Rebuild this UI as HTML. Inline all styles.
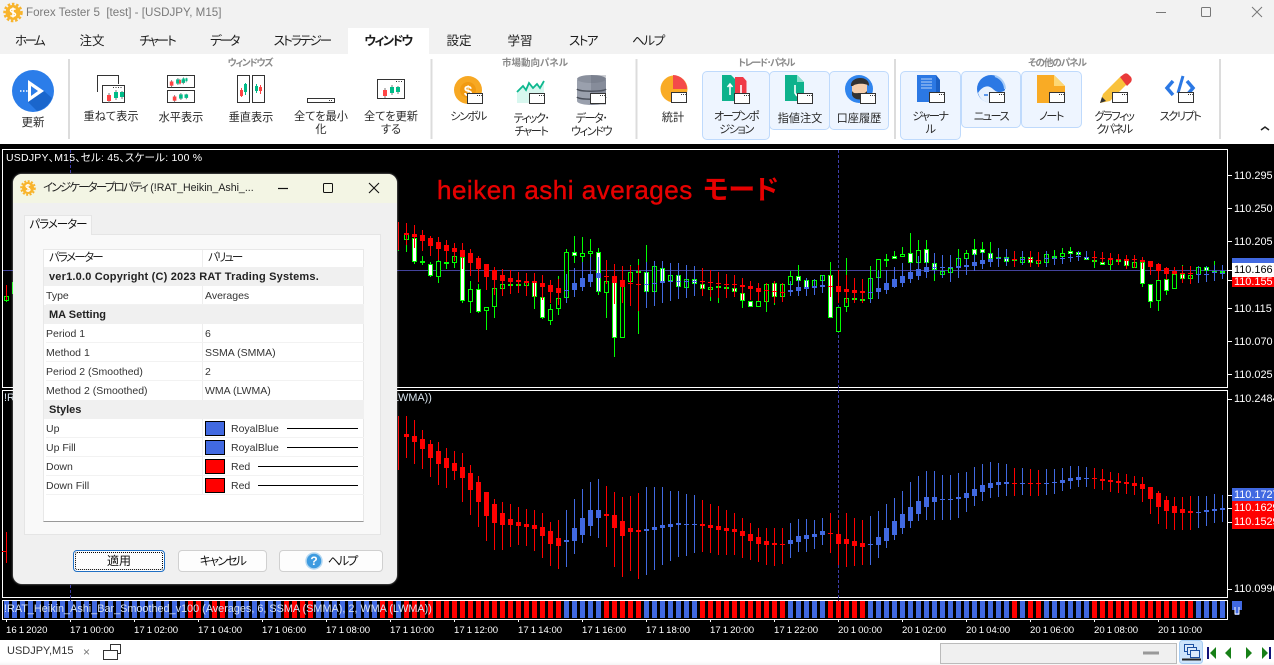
<!DOCTYPE html>
<html lang="ja"><head><meta charset="utf-8"><title>Forex Tester 5</title>
<style>
html,body{margin:0;padding:0;width:1274px;height:665px;overflow:hidden;background:#fff}
body{position:relative;font-family:"Liberation Sans","Noto Sans CJK JP",sans-serif;font-size:12px;color:#222;font-feature-settings:"palt"}
.a{position:absolute;white-space:nowrap}
.c{position:absolute;white-space:nowrap;transform:translateX(-50%);text-align:center;line-height:13px;font-size:11.2px;color:#2a2a2a}
.k{letter-spacing:-1.5px}
.g{position:absolute;white-space:nowrap;transform:translateX(-50%);font-size:9.5px;font-weight:bold;color:#8a8a8a;line-height:11px}
.t{position:absolute;white-space:nowrap;transform:translateX(-50%);top:34px;font-size:12.5px;line-height:15px;color:#1d1d1d}
.hl{position:absolute;background:#eef5ff;border:1.5px solid #bfdafc;border-radius:5px;box-sizing:border-box}
.p{position:absolute;left:1234px;color:#fff;font-size:10.9px;line-height:13px;white-space:nowrap}
.x{position:absolute;top:625px;color:#fff;font-size:9.6px;word-spacing:-.6px;line-height:12px;white-space:nowrap}
.r{position:absolute;left:46px;width:318px;font-size:10.5px;line-height:21px;height:19px;color:#333;white-space:nowrap}
.r i{font-style:normal;position:absolute;left:159px}
.sec{background:#f0f0f0;font-weight:bold;font-size:11px;color:#222;left:44px;width:320px;padding-left:5px;box-sizing:border-box}
.sw{position:absolute;left:205px;width:20px;height:15px;border:1px solid #000;box-sizing:border-box}
.ln{position:absolute;height:1px;background:#000;right:16px}
.btn{position:absolute;top:550px;height:22px;background:#fdfdfd;border:1px solid #d0d0d0;border-radius:4px;box-sizing:border-box;text-align:center;line-height:21px;font-size:12px;color:#111}
</style></head><body>

<!-- title bar + tabs -->
<div class="a" style="left:0;top:0;width:1274px;height:54px;background:#f2f2f2"></div>
<div class="a" style="left:348px;top:28px;width:81px;height:26px;background:#fff"></div>
<div class="a" style="left:26px;top:5px;font-size:11.6px;line-height:15px;color:#7a7a7a">Forex Tester 5&nbsp; [test] - [USDJPY, M15]</div>
<div class="t" style="left:29px;letter-spacing:-2.6px">ホーム</div><div class="t" style="left:92px">注文</div><div class="t" style="left:157px;letter-spacing:-2px">チャート</div><div class="t" style="left:224px;letter-spacing:-2.3px">データ</div><div class="t" style="left:302px;letter-spacing:-1.8px">ストラテジー</div><div class="t" style="left:388px;font-weight:bold;letter-spacing:-1.8px">ウィンドウ</div><div class="t" style="left:459px">設定</div><div class="t" style="left:520px">学習</div><div class="t" style="left:583px;letter-spacing:-1.5px">ストア</div><div class="t" style="left:648px;letter-spacing:-1.3px">ヘルプ</div>

<!-- highlighted ribbon boxes -->
<div class="hl" style="left:702px;top:71px;width:68px;height:69px"></div>
<div class="hl" style="left:769px;top:71px;width:61px;height:59px"></div>
<div class="hl" style="left:829px;top:71px;width:60px;height:59px"></div>
<div class="hl" style="left:900px;top:71px;width:61px;height:69px"></div>
<div class="hl" style="left:961px;top:71px;width:60px;height:57px"></div>
<div class="hl" style="left:1021px;top:71px;width:61px;height:57px"></div>

<!-- chart -->
<svg class="a" style="left:0;top:144px" width="1274" height="496" viewBox="0 144 1274 496" shape-rendering="crispEdges">
<rect x="0" y="144" width="1274" height="496" fill="#000"/>
<path d="M2.5 149.5H1227.5V387.5H2.5ZM2.5 390.5H1227.5V597.5H2.5ZM2.5 600.5H1227.5V619.5H2.5Z" fill="none" stroke="#fff"/>
<path d="M3 270.5H1227" stroke="#43439c"/>
<path d="M838.5 150V619M70.5 150V619" stroke="#3d3da8" stroke-dasharray="3 2"/>
<path d="M1228 175.5h4M1228 208.5h4M1228 241.5h4M1228 308.5h4M1228 341.5h4M1228 374.5h4M1228 399.5h4M1228 495.5h4M1228 589.5h4" stroke="#fff"/>
<path d="M6.5 619v3M70.5 619v3M134.5 619v3M198.5 619v3M262.5 619v3M326.5 619v3M390.5 619v3M454.5 619v3M518.5 619v3M582.5 619v3M646.5 619v3M710.5 619v3M774.5 619v3M838.5 619v3M902.5 619v3M966.5 619v3M1030.5 619v3M1094.5 619v3M1158.5 619v3" stroke="#fff"/>

<g transform="translate(.5 0)" fill="none">
<!-- green wicks -->
<path stroke="#0f0" d="M6 292V302M12 282V294M398 245V251M406 233V252M414 238V264M422 256V265M430 262V277M438 260V283M446 261V269M454 255V268M462 257V303M470 281V313M478 284V313M486 307V330M494 288V318M502 284V296M526 282V296M534 281V309M542 297V319M550 304V325M558 276V315M566 249V303M574 236V263M582 237V262M590 239V257M598 248V295M606 281V318M614 282V357M622 282V338M630 265V282M638 259V334M646 245V292M654 266V292M662 268V282M670 275V281M678 275V287M686 279V288M694 279V284M702 284V289M710 287V301M718 286V303M734 288V292M742 293V308M750 301V307M758 301V307M766 284V312M774 283V305M782 284V297M790 271V285M798 265V281M806 280V288M814 280V287M822 275V281M830 262V318M838 307V332M846 258V312M870 266V303M878 259V278M886 254V267M894 251V259M902 247V257M910 233V263M918 240V263M926 240V263M934 263V281M942 271V275M950 268V282M958 249V267M966 250V259M974 239V255M982 242V253M990 242V259M1006 257V262M1022 257V263M1030 257V263M1038 260V264M1046 254V263M1054 250V258M1062 248V257M1070 247V254M1078 252V255M1086 257V260M1094 257V268M1102 262V265M1110 259V270M1126 260V266M1134 262V268M1142 262V287M1150 284V308M1158 280V311M1166 279V295M1174 274V289M1182 265V279M1190 275V279M1198 267V275M1206 267V271M1214 261V272"/>
<!-- green bodies -->
<path stroke="#0f0" stroke-width="5" d="M6 296V301M406 233V240M414 238V262M422 261V263M430 264V276M438 261V277M446 262V264M454 256V263M462 257V301M470 289V302M478 289V312M486 307V311M494 288V307M502 284V289M510 284V286M518 284V286M526 282V286M534 281V297M542 297V318M550 309V321M558 298V309M566 252V298M574 252V256M582 253V257M590 251V254M598 252V292M606 281V293M614 282V338M622 282V338M630 272V282M638 271V273M646 272V292M654 266V292M662 268V282M670 275V281M678 275V287M686 279V288M694 279V284M702 284V289M710 287V290M718 286V288M726 287V289M734 288V292M742 293V301M750 301V307M758 301V307M766 284V302M774 283V297M782 284V297M790 276V285M798 276V281M806 280V288M814 280V287M822 275V281M830 275V318M838 307V332M846 298V307M854 298V300M862 299V301M870 278V299M878 259V278M886 259V261M894 256V259M902 254V257M910 253V263M918 250V263M926 249V263M934 263V270M942 271V275M950 268V273M958 258V267M966 253V259M974 249V255M982 249V253M990 253V259M998 257V259M1006 257V262M1014 259V261M1022 257V263M1030 257V263M1038 260V264M1046 254V263M1054 256V258M1062 253V257M1070 251V254M1078 252V255M1086 257V260M1094 260V262M1102 262V265M1110 259V265M1118 260V262M1126 260V266M1134 262V268M1142 262V284M1150 284V302M1158 280V301M1166 279V291M1174 274V289M1182 274V279M1190 275V279M1198 267V275M1206 267V271M1214 271V273M1222 271V273"/>
<!-- white inner -->
<path stroke="#fff" stroke-width="3" d="M414 239V261M430 265V275M462 258V300M478 290V311M534 282V296M542 298V317M574 253V255M598 253V291M614 283V337M646 273V291M662 269V281M678 276V286M694 280V283M702 285V288M734 289V291M742 294V300M750 302V306M774 284V296M798 277V280M806 281V287M830 276V317M894 257V258M910 254V262M926 250V262M934 264V269M974 250V254M982 250V252M990 254V258M1006 258V261M1030 258V262M1070 252V253M1078 253V254M1086 258V259M1102 263V264M1126 261V265M1142 263V283M1150 285V301M1166 280V290M1182 275V278M1206 268V270"/>
<!-- black inner -->
<path stroke="#000" stroke-width="3" d="M6 297V300M406 234V239M438 262V276M454 257V262M470 290V301M486 308V310M494 289V306M502 285V288M526 283V285M550 310V320M558 299V308M566 253V297M582 254V256M590 252V253M606 282V292M622 283V337M630 273V281M654 267V291M670 276V280M686 280V287M710 288V289M758 302V306M766 285V301M782 285V296M790 277V284M814 281V286M822 276V280M838 308V331M846 299V306M870 279V298M878 260V277M902 255V256M918 251V262M942 272V274M950 269V272M958 259V266M966 254V258M1022 258V262M1038 261V263M1046 255V262M1062 254V256M1110 260V264M1134 263V267M1158 281V300M1174 275V288M1190 276V278M1198 268V274"/>
<!-- top red wicks -->
<path stroke="#f00" d="M6 285V300M398 222V250M406 223V245M414 225V248M422 230V251M430 236V256M438 237V260M446 240V262M454 243V261M462 243V269M470 249V276M478 256V282M486 264V290M494 267V295M502 269V296M510 270V294M518 272V293M526 273V296M534 273V297M542 275V300M550 280V303M558 279V305M606 260V284M614 264V304M622 266V303M630 266V306M638 265V311M702 268V296M710 270V297M718 272V298M726 274V298M734 275V297M742 278V300M750 281V300M758 283V301M766 283V302M774 281V303M782 283V302M830 275V297M838 270V303M846 275V303M854 278V303M862 279V303M1014 251V267M1030 251V267M1038 252V267M1094 251V262M1102 252V263M1110 253V265M1118 254V265M1126 255V269M1134 255V268M1142 257V269M1150 261V275M1158 263V280M1166 267V280M1174 267V275M1182 266V283M1190 266V284"/>
<!-- top blue wicks -->
<path stroke="#4169e1" d="M566 274V303M574 268V297M582 262V291M590 257V287M598 257V292M646 262V308M654 261V306M662 261V303M670 263V301M678 263V299M686 265V298M694 266V296M790 281V296M798 278V296M806 278V296M814 279V295M822 275V293M870 278V303M878 270V299M886 270V294M894 267V288M902 263V287M910 263V283M918 256V280M926 253V278M934 253V274M942 255V278M950 255V282M958 257V278M966 258V275M974 253V271M982 252V269M990 253V267M998 248V267M1006 249V266M1022 251V265M1046 251V267M1054 256V265M1062 257V264M1070 254V262M1078 251V261M1086 251V260M1198 266V283M1206 266V282M1214 265V281M1222 265V279"/>
<!-- top red bodies -->
<path stroke="#f00" stroke-width="5" d="M406 233V235M414 234V237M422 235V241M430 238V246M438 242V249M446 245V251M454 248V252M462 250V257M470 253V263M478 258V269M486 264V277M494 270V280M502 275V281M510 278V282M518 280V282M526 281V283M534 281V283M542 283V287M550 285V292M558 288V293M606 276V277M614 276V283M622 280V287M630 283V284M638 284V285M702 281V282M710 282V283M718 283V284M726 284V285M734 284V285M742 285V287M750 286V289M758 288V292M766 290V291M774 291V292M782 292V293M830 286V287M838 286V292M846 289V292M854 290V293M862 291V293M1014 259V260M1030 259V260M1038 260V261M1094 257V258M1102 258V259M1110 258V260M1118 259V260M1126 259V261M1134 259V260M1142 260V262M1150 261V267M1158 264V271M1166 268V274M1174 271V274M1182 273V274M1190 273V274"/>
<!-- top blue bodies -->
<path stroke="#4169e1" stroke-width="5" d="M566 290V291M574 283V290M582 278V287M590 274V282M598 273V278M646 284V285M654 283V284M662 281V283M670 281V282M678 281V282M686 281V282M694 281V282M790 290V292M798 287V291M806 287V289M814 286V288M822 285V287M870 292V293M878 288V292M886 283V290M894 279V287M902 276V283M910 272V279M918 269V276M926 267V272M934 267V268M942 267V268M950 267V268M958 266V268M966 265V267M974 262V266M982 260V264M990 259V262M998 258V259M1006 258V259M1022 259V260M1046 258V259M1054 258V259M1062 258V259M1070 257V258M1078 256V257M1086 257V258M1198 274V275M1206 274V275M1214 272V273M1222 273V274"/>

<!-- bottom red -->
<path stroke="#f00" d="M6 532V563M398 416V470M406 416V458M414 420V464M422 430V469M430 440V477M438 442V485M446 448V488M454 451V480M462 453V502M470 465V515M478 476V527M486 492V541M494 499V550M502 502V550M510 504V547M518 507V545M526 509V546M534 510V551M542 513V558M550 522V566M558 520V569M606 486V547M614 492V567M622 497V577M630 496V571M638 493V579M702 500V552M710 504V553M718 506V555M726 510V555M734 513V555M742 518V558M750 523V560M758 528V562M766 528V565M774 528V566M782 528V564M830 513V553M838 520V565M846 513V567M854 518V566M862 520V565M1014 468V496M1030 469V496M1038 470V496M1094 468V489M1102 469V490M1110 472V492M1118 473V493M1126 474V494M1134 476V495M1142 477V502M1150 487V514M1158 491V524M1166 496V529M1174 497V530M1182 497V530M1190 496V530"/>
<path stroke="#f00" stroke-width="5" d="M4 551V552M406 434V437M414 436V442M422 439V449M430 444V458M438 451V464M446 458V468M454 463V471M462 467V478M470 473V490M478 482V502M486 492V516M494 504V523M502 513V525M510 519V525M518 522V526M526 524V527M534 525V529M542 527V536M550 531V544M558 538V546M606 514V516M614 515V528M622 521V536M630 528V532M638 530V532M702 524V526M710 525V528M718 526V530M726 528V531M734 529V532M742 531V536M750 534V541M758 537V544M766 541V545M774 543V545M782 544V545M830 533V534M838 534V544M846 539V544M854 541V546M862 543V547M1014 483V484M1030 483V484M1038 483V484M1094 478V479M1102 479V481M1110 480V482M1118 481V483M1126 482V484M1134 483V486M1142 484V489M1150 487V499M1158 493V507M1166 500V511M1174 506V513M1182 509V513M1190 511V513"/>
<!-- bottom blue -->
<path stroke="#4169e1" d="M566 510V567M574 499V554M582 489V543M590 482V536M598 479V538M646 487V575M654 487V570M662 487V565M670 491V561M678 491V557M686 494V556M694 495V553M790 523V558M798 519V552M806 519V552M814 520V549M822 518V545M870 516V565M878 511V558M886 504V548M894 498V540M902 491V534M910 482V528M918 476V521M926 471V520M934 471V520M942 475V520M950 475V520M958 473V518M966 472V512M974 467V506M982 464V501M990 462V498M998 463V497M1006 464V496M1022 468V495M1046 469V495M1054 469V494M1062 468V491M1070 466V489M1078 466V487M1086 467V487M1198 496V528M1206 496V526M1214 494V523M1222 495V522"/>
<path stroke="#4169e1" stroke-width="5" d="M566 540V542M574 528V541M582 518V535M590 510V526M598 510V518M646 529V531M654 527V530M662 525V528M670 524V527M678 523V525M686 524V525M694 524V525M790 540V544M798 536V542M806 535V539M814 534V537M822 531V535M870 544V545M878 537V545M886 528V541M894 521V535M902 514V528M910 507V521M918 501V514M926 497V507M934 497V502M942 499V500M950 499V500M958 497V499M966 493V498M974 489V496M982 485V492M990 483V488M998 482V485M1006 482V484M1022 483V484M1046 483V484M1054 482V483M1062 480V483M1070 478V481M1078 477V480M1086 478V479M1198 512V513M1206 510V512M1214 509V511M1222 508V510"/>
</g>

<!-- strip -->
<path d="M4 609.5H1226" stroke="#4169e1" stroke-width="17" stroke-dasharray="5 3" fill="none"/>
<path d="M188 609.5H204M212 609.5H228M284 609.5H300M300 609.5H316M380 609.5H396M404 609.5H564M604 609.5H644M700 609.5H788M828 609.5H868M1012 609.5H1020M1028 609.5H1044M1092 609.5H1196" stroke="#f00" stroke-width="17" stroke-dasharray="5 3" fill="none"/>
<path d="M1232 601h10v9h-3v5h-4v-5h-3z" fill="#4169e1"/><path d="M1235 607v7h4v-7" stroke="#fff" fill="none"/>

<!-- price boxes -->
<rect x="1232" y="258" width="42" height="6" fill="#4169e1"/>
<rect x="1232" y="276" width="42" height="11" fill="#f00"/>
<rect x="1232" y="263" width="42" height="14" fill="#fff"/>
<rect x="1232" y="488" width="42" height="13" fill="#4169e1"/>
<rect x="1232" y="501" width="42" height="28" fill="#f00"/>
<path d="M1228 270.5h4M1228 280.5h4M1228 495.5h4M1228 508.5h4M1228 522.5h4" stroke="#fff"/>
</svg>

<div class="p" style="top:170px">110.295</div><div class="p" style="top:203px">110.250</div><div class="p" style="top:236px">110.205</div>
<div class="p" style="top:264px;color:#000">110.166</div><div class="p" style="top:276px;height:11px;overflow:hidden">110.155</div>
<div class="p" style="top:303px">110.115</div><div class="p" style="top:336px">110.070</div><div class="p" style="top:369px">110.025</div>
<div class="p" style="top:393px">110.2484</div><div class="p" style="top:489px;width:42px;overflow:hidden">110.1727</div><div class="p" style="top:502px;width:42px;overflow:hidden">110.1629</div><div class="p" style="top:516px;width:42px;overflow:hidden">110.1529</div><div class="p" style="top:583px;width:42px;overflow:hidden">110.0990</div>

<div class="x" style="left:6px">16 1 2020</div><div class="x" style="left:70px">17 1 00:00</div><div class="x" style="left:134px">17 1 02:00</div><div class="x" style="left:198px">17 1 04:00</div><div class="x" style="left:262px">17 1 06:00</div><div class="x" style="left:326px">17 1 08:00</div><div class="x" style="left:390px">17 1 10:00</div><div class="x" style="left:454px">17 1 12:00</div><div class="x" style="left:518px">17 1 14:00</div><div class="x" style="left:582px">17 1 16:00</div><div class="x" style="left:646px">17 1 18:00</div><div class="x" style="left:710px">17 1 20:00</div><div class="x" style="left:774px">17 1 22:00</div><div class="x" style="left:838px">20 1 00:00</div><div class="x" style="left:902px">20 1 02:00</div><div class="x" style="left:966px">20 1 04:00</div><div class="x" style="left:1030px">20 1 06:00</div><div class="x" style="left:1094px">20 1 08:00</div><div class="x" style="left:1158px">20 1 10:00</div>

<div class="a" style="left:6px;top:152px;color:#fff;font-size:10.5px;letter-spacing:.22px;line-height:13px">USDJPY、M15、セル: 45、スケール: 100 %</div>
<div class="a" style="left:4px;top:392px;color:#d8e4ee;font-size:10.85px;line-height:13px">!RAT_Heikin_Ashi_Bar_Smoothed_v100 (Averages, 6, SSMA (SMMA), 2, WMA (LWMA))</div>
<div class="a" style="left:4px;top:602px;color:#d8e4f4;font-size:10.85px;line-height:14px">!RAT_Heikin_Ashi_Bar_Smoothed_v100 (Averages, 6, SSMA (SMMA), 2, WMA (LWMA))</div>
<div class="a" style="left:437px;top:175px;color:#e60000;font-size:26px;letter-spacing:.5px;line-height:30px;-webkit-text-stroke:.4px #e60000">heiken ashi averages</div>
<div class="a" style="left:703px;top:175px;color:#e60000;font-size:27px;font-weight:bold;line-height:30px">モード</div>

<!-- ribbon icons -->
<svg class="a" style="left:0;top:0" width="1274" height="144" viewBox="0 0 1274 144">
<defs>
<g id="w"><rect x=".5" y=".5" width="15" height="10" fill="#fff" stroke="#333"/><path d="M10 2.500h1M12 2.500h1M14 2.500h.8" stroke="#333"/></g>
<g id="s"><path d="M4 3v10M11 0v10M17 1v8" stroke="#777"/><rect x="2" y="5" width="4" height="6" fill="#f44"/><rect x="9" y="2" width="4" height="6" fill="#0b8"/><rect x="15" y="2" width="4" height="5" fill="#0b8"/></g>
</defs>
<!-- logo -->
<circle cx="13" cy="12.500" r="7.500" fill="#f8b42c"/><circle cx="13" cy="12.500" r="8.500" fill="none" stroke="#f8b42c" stroke-width="2.500" stroke-dasharray="2.500 1.800"/><path d="M15.500 9.500c-1-1-5-1-5 1s5 2 5 4-4 2-5 1M13 7.500v10" stroke="#fff" stroke-width="1.500" fill="none"/>
<!-- window buttons -->
<path d="M1156 12.500h10" stroke="#777"/><rect x="1201.500" y="7.500" width="9" height="9" rx="1" fill="none" stroke="#777"/><path d="M1252 7l10 10M1262 7l-10 10" stroke="#777"/>
<!-- separators -->
<path d="M69 59v80M431.500 59v80M636.500 59v80M895 59v80M1220 59v80" stroke="#dcdcdc" stroke-width="2"/>
<path d="M1261 130l4-3 4 3" stroke="#222" stroke-width="1.500" fill="none"/>
<!-- refresh -->
<circle cx="33" cy="91" r="21" fill="#2b7de9"/><path d="M28 102l16-11 8 7a21 21 0 0 1-15 13z" fill="#1a66cc"/><path d="M28 80l16 11-16 11z" fill="#fff"/><path d="M31 86l7 5-7 5z" fill="#2b7de9"/><path d="M20 91h1.500M23 91h1.500M26 91h1.500" stroke="#fff" stroke-width="1.500"/>
<!-- 重ねて -->
<path d="M97.500 92V75.500H118.500V84" fill="none" stroke="#333"/><rect x="102.500" y="85.500" width="22" height="17" fill="#fff" stroke="#333"/><path d="M113 87.500h1M115.500 87.500h1M118 87.500h1M120.500 87.500h1" stroke="#333"/><use href="#s" x="105" y="90"/>
<!-- 水平 -->
<rect x="167.500" y="75.500" width="27" height="12" fill="#fff" stroke="#333"/><rect x="167.500" y="90.500" width="27" height="12" fill="#fff" stroke="#333"/><use href="#s" transform="translate(168 78) scale(.9 .7)"/><use href="#s" transform="translate(171 93) scale(.9 .7)"/><use href="#s" transform="translate(178 77) scale(.5 .6)"/>
<!-- 垂直 -->
<rect x="237.500" y="75.500" width="12" height="27" fill="#fff" stroke="#333"/><rect x="252.500" y="75.500" width="12" height="27" fill="#fff" stroke="#333"/><path d="M241.500 88v9" stroke="#f44"/><rect x="240" y="90" width="3" height="6" fill="#f44"/><path d="M245.500 83v12" stroke="#0b8"/><rect x="244" y="84" width="3" height="8" fill="#0b8"/><path d="M256.500 84v9" stroke="#0b8"/><rect x="255" y="86" width="3" height="5" fill="#0b8"/><path d="M260.500 85v9" stroke="#f44"/><rect x="259" y="87" width="3" height="4" fill="#f44"/>
<!-- 最小化 -->
<rect x="307.500" y="98.500" width="27" height="4" fill="#fff" stroke="#333"/><path d="M329 100.500h1M331 100.500h1" stroke="#333"/>
<!-- 更新 -->
<rect x="377.500" y="79.500" width="27" height="19" fill="#fff" stroke="#333"/><path d="M396 81.500h1M398.500 81.500h1M401 81.500h1" stroke="#333"/><use href="#s" x="381" y="85"/>
<!-- シンボル -->
<circle cx="468" cy="90" r="14" fill="#f7a823"/><path d="M468 90m-8 0a8 8 0 1 0 16 0a8 8 0 1 0-16 0" fill="#f19a12"/><text x="468" y="96" font-family="Liberation Sans" font-weight="bold" font-size="15" fill="#fff" text-anchor="middle">$</text><use href="#w" x="467" y="93"/>
<!-- ティック -->
<path d="M517 103V92l6-6 3 4 3-7 4 5 4-4 3 4 4-7v22z" fill="#d8f7ef"/><path d="M517 92l6-6 3 4 3-7 4 5 4-4 3 4 4-7" fill="none" stroke="#0eb88f" stroke-width="1.800"/><use href="#w" x="529" y="93"/>
<!-- データ -->
<path d="M577 80v21c0 2 6 4 14 4s15-2 15-4V80z" fill="#9aa0ad"/><ellipse cx="591.500" cy="79" rx="14.500" ry="4" fill="#8a909d"/><path d="M577 89c2 3 27 3 29 0M577 97c2 3 27 3 29 0" fill="none" stroke="#4a4f5a" stroke-width="1.500"/><path d="M591 75h15v30h-15z" fill="#5a6070" opacity=".3"/><use href="#w" x="590" y="93"/>
<!-- 統計 -->
<circle cx="674" cy="89" r="13.500" fill="#f9ab25"/><path d="M673 75a14 14 0 0 1 14 14h-14z" fill="#f44a4a"/><use href="#w" x="671" y="92"/>
<!-- オープンポジション -->
<path d="M722 75h9l4 4v22h-13z" fill="#0eb28c"/><path d="M735 77h8l3.500 4v20H735z" fill="#f03a47"/><path d="M730 95V84m-2.500 3l2.500-3 2.500 3" stroke="#fff" stroke-width="1.600" fill="none"/><path d="M741 85v9" stroke="#fff" stroke-width="1.600"/><use href="#w" x="734" y="93"/>
<!-- 指値注文 -->
<path d="M785 75h12l7 7v19h-19z" fill="#0eb28c"/><path d="M797 75v7h7z" fill="#8ce0cc"/><path d="M795 85v8l2 3" stroke="#fff" stroke-width="1.600" fill="none"/><use href="#w" x="797" y="93"/>
<!-- 口座履歴 -->
<circle cx="859" cy="89" r="14" fill="#3085ee"/><path d="M852 85c0-6 15-6 15 0v6c-1 5-4 7-7.500 7s-6.500-2-7.500-7z" fill="#f5cfae"/><path d="M851 86c-1-10 18-11 18-1v1c-2-3-14-3-16 0z" fill="#333"/><path d="M852 91c2 3 4 2 7.500 2s5 1 7.500-2v4c-2 6-13 6-15 0z" fill="#333"/><use href="#w" x="860" y="93"/>
<!-- ジャーナル -->
<path d="M917 75h19l4 5v22h-23z" fill="#2b78e4"/><path d="M921 79h11M921 82h11M921 85h11M921 88h11" stroke="#b5d2f8"/><path d="M936 75l4 5v22h-4z" fill="#1a5fc4"/><use href="#w" x="929" y="92"/>
<!-- ニュース -->
<circle cx="991" cy="89" r="14" fill="#2b78e4"/><path d="M978 93c3-5 8-8 12-6s5 5 9 5 5-1 6-2c-1 7-7 13-14 13s-11-4-13-10z" fill="#e6f0fd"/><path d="M984 95h4M990 97h5" stroke="#2b78e4" stroke-width="1.500"/><path d="M995 76a14 14 0 0 1 10 13" fill="none" stroke="#a9cdf8" stroke-width="2"/><use href="#w" x="989" y="92"/>
<!-- ノート -->
<path d="M1037 75h17l11 11v17h-28z" fill="#f9ab25"/><path d="M1054 75l11 11h-11z" fill="#fdd775"/><use href="#w" x="1049" y="92"/>
<!-- グラフィック -->
<path d="M1100 103l3-9 17-17 7 7-17 17z" fill="#f9c23c"/><path d="M1120 77l4-3c2-1 3-1 5 1l2 2c1 2 1 3 0 5l-4 4z" fill="#e93a3a"/><path d="M1100 103l2-6 4 4z" fill="#333"/><use href="#w" x="1112" y="92"/>
<!-- スクリプト -->
<path d="M1173 81l-6 7 6 7" fill="none" stroke="#2b78e4" stroke-width="3.500"/><path d="M1187 81l6 7-6 7" fill="none" stroke="#2b78e4" stroke-width="3.500"/><path d="M1183 76l-5 17" stroke="#2b78e4" stroke-width="3"/><use href="#w" x="1178" y="92"/>
</svg>

<!-- group labels -->
<div class="g" style="left:250px;top:58px;letter-spacing:-1.2px">ウィンドウズ</div><div class="g" style="left:535px;top:58px">市場動向パネル</div><div class="g" style="left:766px;top:58px;letter-spacing:-1.4px">トレード･パネル</div><div class="g" style="left:1057px;top:58px;letter-spacing:-1px">その他のパネル</div>

<!-- ribbon labels -->
<div class="c" style="left:33px;top:117px;font-size:11.5px">更新</div>
<div class="c" style="left:111px;top:111px">重ねて表示</div><div class="c" style="left:181px;top:112px">水平表示</div><div class="c" style="left:251px;top:112px">垂直表示</div>
<div class="c" style="left:321px;top:111px">全てを最小<br>化</div><div class="c" style="left:391px;top:111px">全てを更新<br>する</div>
<div class="c k" style="left:468px;top:111px">シンボル</div><div class="c k" style="left:531px;top:113px">ティック･<br>チャート</div><div class="c k" style="left:591px;top:113px">データ･<br>ウィンドウ</div>
<div class="c" style="left:673px;top:112px">統計</div><div class="c k" style="left:736px;top:111px">オープンポ<br>ジション</div><div class="c" style="left:800px;top:113px">指値注文</div><div class="c" style="left:859px;top:113px">口座履歴</div>
<div class="c k" style="left:930px;top:111px">ジャーナ<br>ル</div><div class="c k" style="left:991px;top:111px">ニュース</div><div class="c k" style="left:1051px;top:111px">ノート</div><div class="c k" style="left:1114px;top:111px">グラフィッ<br>クパネル</div><div class="c k" style="left:1180px;top:111px">スクリプト</div>

<!-- dialog -->
<div class="a" style="left:13px;top:174px;width:384px;height:410px;background:#f0f0f0;border-radius:9px;box-shadow:0 0 2px rgba(255,255,255,.6)"></div>
<div class="a" style="left:13px;top:174px;width:384px;height:29px;background:#f3f5e4;border-radius:9px 9px 0 0"></div>
<svg class="a" style="left:20px;top:180px" width="16" height="16" viewBox="0 0 16 16"><circle cx="8" cy="8" r="6" fill="#f8b42c"/><circle cx="8" cy="8" r="6.800" fill="none" stroke="#f8b42c" stroke-width="2" stroke-dasharray="2 1.500"/><path d="M10 5.500c-1-1-4-1-4 .8s4 1.600 4 3.400-3 1.600-4 .8M8 4v8" stroke="#fff" stroke-width="1.200" fill="none"/></svg>
<div class="a" style="left:43px;top:181px;font-size:11.5px;line-height:15px;color:#222"><span style="letter-spacing:-1.8px">インジケータープロパティ</span> <span style="font-size:10.6px">(!RAT_Heikin_Ashi_...</span></div>
<svg class="a" style="left:270px;top:178px" width="120" height="20"><path d="M8 10.500h10" stroke="#111" stroke-width="1.200"/><rect x="53.500" y="5.500" width="9" height="9" rx="1" fill="none" stroke="#111"/><path d="M99 5l10 10M109 5l-10 10" stroke="#111" stroke-width="1.100"/></svg>
<div class="a" style="left:24px;top:234px;width:357px;height:301px;background:#f9f9f9;border:1px solid #e5e5e5;box-sizing:border-box"></div>
<div class="a" style="left:24px;top:215px;width:68px;height:20px;background:#f9f9f9;border:1px solid #e5e5e5;border-bottom:0;box-sizing:border-box;text-align:center;line-height:18px;font-size:11.5px;letter-spacing:-1px;color:#111">パラメーター</div>
<div class="a" style="left:43px;top:249px;width:321px;height:273px;background:#fff;border:1px solid #e8e8e8;border-bottom:1px solid #999;box-sizing:border-box"></div>
<div class="a" style="left:202px;top:250px;width:1px;height:245px;background:#eee"></div>
<div class="a" style="left:49px;top:251px;font-size:11.5px;letter-spacing:-1.7px;line-height:15px;color:#222">パラメーター</div><div class="a" style="left:208px;top:251px;font-size:11.5px;letter-spacing:-2px;line-height:15px;color:#222">バリュー</div>
<div class="r sec" style="top:267px;letter-spacing:.19px">ver1.0.0 Copyright (C) 2023 RAT Trading Systems.</div>
<div class="r" style="top:286px;border-bottom:1px solid #f2f2f2;height:18px">Type<i>Averages</i></div>
<div class="r sec" style="top:305px">MA Setting</div>
<div class="r" style="top:324px;border-bottom:1px solid #f2f2f2;height:18px">Period 1<i>6</i></div>
<div class="r" style="top:343px;border-bottom:1px solid #f2f2f2;height:18px">Method 1<i>SSMA (SMMA)</i></div>
<div class="r" style="top:362px;border-bottom:1px solid #f2f2f2;height:18px">Period 2 (Smoothed)<i>2</i></div>
<div class="r" style="top:381px;height:19px">Method 2 (Smoothed)<i>WMA (LWMA)</i></div>
<div class="r sec" style="top:400px">Styles</div>
<div class="r" style="top:419px;border-bottom:1px solid #f2f2f2;height:18px">Up<i style="left:185px">RoyalBlue</i></div>
<div class="r" style="top:438px;border-bottom:1px solid #f2f2f2;height:18px">Up Fill<i style="left:185px">RoyalBlue</i></div>
<div class="r" style="top:457px;border-bottom:1px solid #f2f2f2;height:18px">Down<i style="left:185px">Red</i></div>
<div class="r" style="top:476px;border-bottom:1px solid #f2f2f2;height:18px">Down Fill<i style="left:185px">Red</i></div>
<div class="sw" style="top:421px;background:#4169e1"></div><div class="sw" style="top:440px;background:#4169e1"></div><div class="sw" style="top:459px;background:#f00"></div><div class="sw" style="top:478px;background:#f00"></div>
<div class="ln" style="left:287px;width:71px;top:428px"></div><div class="ln" style="left:287px;width:71px;top:447px"></div><div class="ln" style="left:258px;width:100px;top:466px"></div><div class="ln" style="left:258px;width:100px;top:485px"></div>
<div class="btn" style="left:73px;width:92px;border:1px solid #1f6fc4;outline:1px dotted #000;outline-offset:-3px">適用</div>
<div class="btn" style="left:178px;width:89px;letter-spacing:-1.8px">キャンセル</div>
<div class="btn" style="left:279px;width:104px;padding-left:22px;letter-spacing:-2px">ヘルプ</div>
<svg class="a" style="left:305px;top:552px" width="18" height="18"><circle cx="9" cy="9" r="8" fill="#3d9be0" stroke="#b5d8f2" stroke-width="1.500"/><text x="9" y="13" font-family="Liberation Sans" font-weight="bold" font-size="12" fill="#fff" text-anchor="middle">?</text></svg>

<!-- status bar -->
<div class="a" style="left:0;top:640px;width:1274px;height:25px;background:linear-gradient(#fff,#fff 85%,#f5f5f5)"></div>
<div class="a" style="left:7px;top:644px;font-size:11px;line-height:15px;color:#333">USDJPY,M15</div>
<div class="a" style="left:83px;top:645px;font-size:12px;line-height:14px;color:#777">×</div>
<svg class="a" style="left:0;top:640px" width="1274" height="25" viewBox="0 640 1274 25">
<path d="M110.500 646.500V644.500h10v9h-3M103.500 650.500h14v9h-14z" fill="#fff" stroke="#333"/><path d="M110.500 646.500v4" stroke="#333"/>
<rect x="940.500" y="643.500" width="236" height="20" fill="#f0f0f0" stroke="#bbb"/><path d="M1143 653h16" stroke="#999" stroke-width="3"/>
<rect x="1179.500" y="640.500" width="23" height="23" rx="3" fill="#cde4fb" stroke="#a6cdf4"/>
<g fill="#dcebfb" stroke="#1b4fa0"><rect x="1184.500" y="644.500" width="9" height="7"/><rect x="1187.500" y="647.500" width="9" height="7"/><rect x="1190.500" y="650.500" width="9" height="7"/></g><path d="M1182 659.500h19" stroke="#222" stroke-width="2"/>
<path d="M1208 647v12" stroke="#12127a" stroke-width="2"/><path d="M1216 647v12l-6-6zM1231 647v12l-6-6zM1246 647v12l6-6zM1262 647v12l6-6z" fill="#178017"/><path d="M1270 647v12" stroke="#12127a" stroke-width="2"/>
</svg>
</body></html>
